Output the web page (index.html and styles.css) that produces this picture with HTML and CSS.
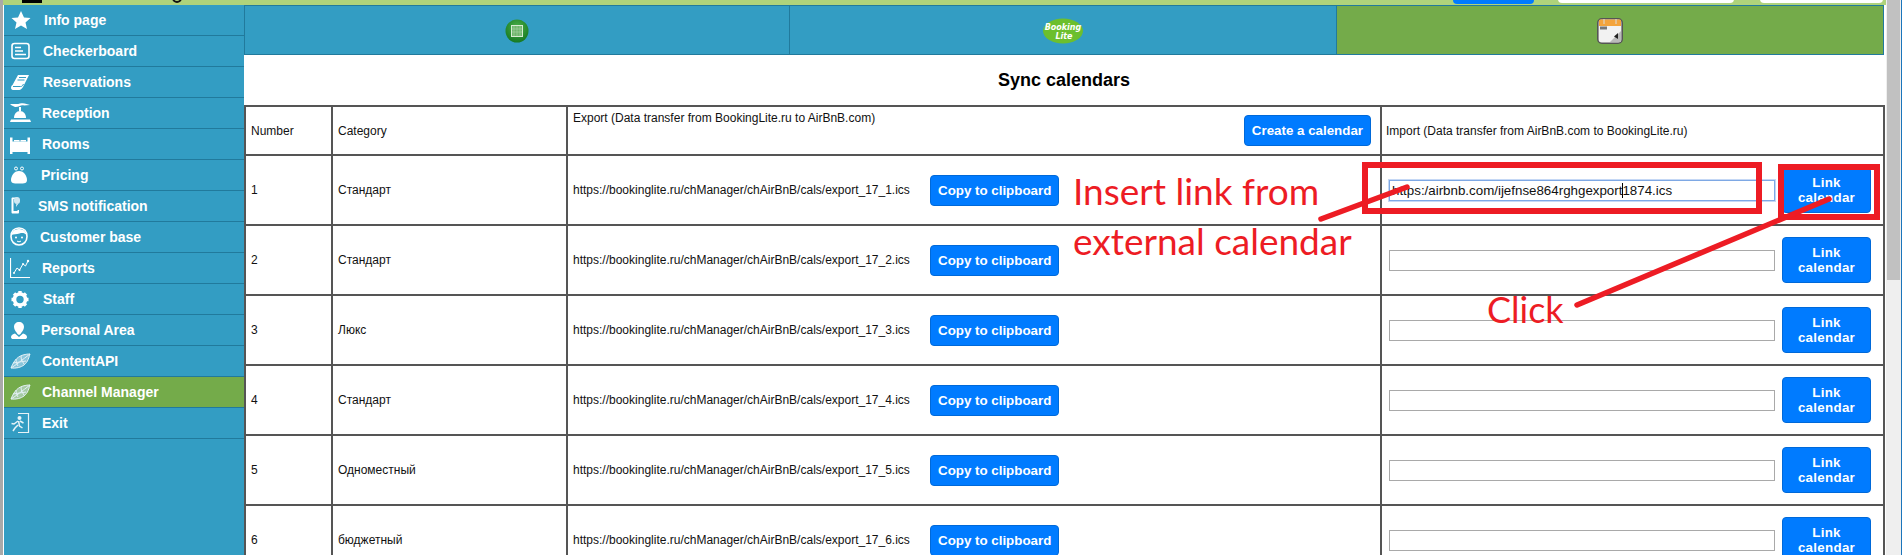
FILE: index.html
```html
<!DOCTYPE html>
<html lang="en">
<head>
<meta charset="utf-8">
<title>Sync calendars</title>
<link rel="stylesheet" href="styles.css">
</head>
<body>
<div class="shell">
  <div class="strip"></div>
  <div class="page">
    <header class="topbar">
      <span class="top-logo"></span>
      <span class="top-ring"></span>
      <span class="top-btn"></span>
      <span class="top-input top-input-a"></span>
      <span class="top-input top-input-b"></span>
    </header>
    <div class="columns">
      <nav class="sidebar">
        <a class="item"><svg width="34" height="30" viewBox="10 0 34 30"><polygon fill="#fff" points="21,6 24,12.5 30.5,13 25.5,17.6 27,24 21,20.6 15,24 16.5,17.6 11.5,13 18,12.5"/></svg><span>Info page</span></a>
        <a class="item"><svg width="33" height="30" viewBox="10 0 33 30"><rect x="12" y="7.5" width="17" height="15" rx="2.5" fill="none" stroke="#fff" stroke-width="1.6"/><path d="M15 11.5h6M15 15h8M15 18.5h11" stroke="#fff" stroke-width="1.4" fill="none"/></svg><span>Checkerboard</span></a>
        <a class="item"><svg width="33" height="30" viewBox="10 0 33 30"><path d="M18 8h11l-6 12c-1.500 2.500-3 3-5 3h-5c-2.500 0-2.500-4-.5-5z" fill="#fff"/><path d="M13 19.500h7.500c1.500 0 2-.5 3-2.500M19 10.500h7M17.500 13h7" stroke="#339dc3" stroke-width="1" fill="none"/></svg><span>Reservations</span></a>
        <a class="item"><svg width="32" height="30" viewBox="10 0 32 30"><path d="M10 6.500c3-1.500 6 .5 10-1 4-1 7 .5 10 1.500l-6 .5c-3-1-6 2-9 1.500z" fill="#fff"/><path d="M19 9h2v4h-2z" fill="#fff"/><path d="M14 20c0-4 2.500-7 6-7s6 3 6 7z" fill="#fff"/><path d="M11 21.500h19l1 2.500H10z" fill="#fff"/></svg><span>Reception</span></a>
        <a class="item"><svg width="32" height="30" viewBox="10 0 32 30"><path d="M10 8.500h2.500v4h15v-4H30V25h-2.500v-2h-15v2H10z" fill="#fff"/><path d="M14 12.500v-1.500h5.500v1.500M20.500 12.500v-1.500H26v1.500" fill="#fff"/></svg><span>Rooms</span></a>
        <a class="item"><svg width="31" height="30" viewBox="10 0 31 30"><circle cx="16" cy="8.500" r="1.500" fill="none" stroke="#fff"/><circle cx="22" cy="8.500" r="1.500" fill="none" stroke="#fff"/><path d="M19 11c5 0 8 5 8 9 0 3-2 3.500-8 3.500s-8-.5-8-3.500c0-4 3-9 8-9z" fill="#fff"/></svg><span>Pricing</span></a>
        <a class="item"><svg width="28" height="30" viewBox="10 0 28 30"><path d="M12.500 6.500h5v1.500h-4v12h4v-1h1.500v2.500c0 .5-.5 1-1 1h-5.500c-.5 0-1-.5-1-1V7.500c0-.5.5-1 1-1z" fill="#fff"/><rect x="14" y="6" width="6" height="7" rx="3" fill="#cfe8f2"/><path d="M16.500 13l-.5 3 2-3" fill="#fff"/></svg><span>SMS notification</span></a>
        <a class="item"><svg width="30" height="30" viewBox="10 0 30 30"><path d="M19 6c5 0 8 3.500 8 8.500S23.500 23 19 23s-8-3.500-8-8.500S14 6 19 6z" fill="none" stroke="#fff" stroke-width="1.600"/><path d="M11.500 13c0-2 2-6 7.500-6s7.500 4 7.500 6c-2-2-4-2.500-7-1.500-3 1-6 .5-8 1.500z" fill="#fff"/><circle cx="16" cy="15.500" r="1" fill="#fff"/><circle cx="22" cy="15.500" r="1" fill="#fff"/><path d="M17 19c1.200 1 2.800 1 4 0" stroke="#fff" fill="none"/></svg><span>Customer base</span></a>
        <a class="item"><svg width="32" height="30" viewBox="10 0 32 30"><path d="M10.500 5v19.500H30" stroke="#fff" stroke-width="1.200" fill="none"/><path d="M14 20l3-5 2.500 2 3.500-6 2.500 2 2.500-5" stroke="#fff" fill="none"/><circle cx="14" cy="20" r="1" fill="#fff"/><circle cx="19.500" cy="17" r="1" fill="#fff"/><circle cx="23" cy="11" r="1" fill="#fff"/><circle cx="28" cy="8" r="1.200" fill="#fff"/></svg><span>Reports</span></a>
        <a class="item"><svg width="33" height="30" viewBox="10 0 33 30"><circle cx="20" cy="15.500" r="5.500" fill="none" stroke="#fff" stroke-width="3.600"/><path d="M20 7v4M20 20v4M11.500 15.500h4M24.500 15.500h4M14 9.500l3 3M23 18.500l3 3M26 9.500l-3 3M17 18.500l-3 3" stroke="#fff" stroke-width="3.400"/></svg><span>Staff</span></a>
        <a class="item"><svg width="31" height="30" viewBox="10 0 31 30"><path d="M19 7c3 0 5 2 5 5s-2.500 5-3.500 7l-1.500 1-1.500-1C16.500 17 14 15 14 12s2-5 5-5z" fill="#fff"/><path d="M15 18.500c-2 .5-4 1.500-4 3.500 0 1.500 1 2 2 2h12c1 0 2-.5 2-2 0-2-2-3-4-3.500L19 22z" fill="#fff"/></svg><span>Personal Area</span></a>
        <a class="item"><svg width="32" height="30" viewBox="10 0 32 30"><use href="#globe"/></svg><span>ContentAPI</span></a>
        <a class="item active"><svg width="32" height="30" viewBox="10 0 32 30"><use href="#globe"/></svg><span>Channel Manager</span></a>
        <a class="item"><svg width="32" height="30" viewBox="10 0 32 30"><path d="M18 5.500h10.500v19H18" fill="none" stroke="#e7f3f7" stroke-width="1.200"/><circle cx="19.500" cy="10" r="2" fill="#e7f3f7"/><path d="M18 13l-4 3-2.500-.5M18.500 13l1 5 3 2M18 17l-3 3 -2 3M20 13l3.500 2" stroke="#e7f3f7" stroke-width="1.500" fill="none"/></svg><span>Exit</span></a>
      </nav>
      <main class="main">
        <div class="tabs">
          <div class="tab">
            <svg width="24" height="24" viewBox="0 0 24 24"><defs><radialGradient id="ball" cx=".5" cy=".35" r=".7"><stop offset="0" stop-color="#4cb04a"/><stop offset="1" stop-color="#12751f"/></radialGradient></defs><circle cx="12" cy="12" r="11.500" fill="url(#ball)"/><rect x="6.500" y="6.500" width="11" height="11" fill="#6fb56c" stroke="#d6ecd2"/><path d="M9 7v10M12 7v10M15 7v10M7 10h10M7 13h10" stroke="#a9d4a4" stroke-width=".6"/></svg>
          </div>
          <div class="tab">
            <svg width="40" height="26" viewBox="0 0 40 26"><ellipse cx="20" cy="13" rx="20" ry="12.500" fill="#6cbf2e"/><text x="20" y="12" class="logo-text">Booking</text><text x="21" y="21" class="logo-text">Lite</text></svg>
          </div>
          <div class="tab tab-active">
            <svg width="26" height="26" viewBox="0 0 26 26"><rect x=".8" y=".8" width="24.400" height="24.400" rx="4" fill="#f2f2f2" stroke="#555" stroke-width="1.600"/><path d="M2 2.500a1.500 1.500 0 0 1 1.500-1h19a1.500 1.500 0 0 1 1.500 1V8H2z" fill="#f4a43c"/><path d="M7 1v5M19 1v5" stroke="#ddd" stroke-width="1"/><rect x="3" y="8.500" width="7" height="3" fill="#777"/><path d="M24 13L13 24h10c.5 0 1-.5 1-1z" fill="#bbb"/><path d="M21 15l-4 3.500 4 2.500z" fill="#222"/></svg>
          </div>
        </div>
        <h1 class="title">Sync calendars</h1>
        <table class="grid">
          <colgroup><col class="c-num"><col class="c-cat"><col class="c-exp"><col class="c-imp"></colgroup>
          <thead>
            <tr>
              <th>Number</th>
              <th>Category</th>
              <th class="export-head"><div class="export-wrap"><span class="export-label">Export (Data transfer from BookingLite.ru to AirBnB.com)</span><button class="btn">Create a calendar</button></div></th>
              <th class="import-head">Import (Data transfer from AirBnB.com to BookingLite.ru)</th>
            </tr>
          </thead>
          <tbody>
            <tr>
              <td>1</td><td>Стандарт</td>
              <td><div class="export-row"><span class="url">https://bookinglite.ru/chManager/chAirBnB/cals/export_17_1.ics</span><button class="btn">Copy to clipboard</button></div></td>
              <td class="import-cell"><div class="import-row"><span class="field"><input class="link-input focused" type="text" value="https:/airbnb.com/ijefnse864rghgexport1874.ics"><i class="caret"></i></span><button class="btn btn-link">Link calendar</button></div></td>
            </tr>
            <tr>
              <td>2</td><td>Стандарт</td>
              <td><div class="export-row"><span class="url">https://bookinglite.ru/chManager/chAirBnB/cals/export_17_2.ics</span><button class="btn">Copy to clipboard</button></div></td>
              <td class="import-cell"><div class="import-row"><span class="field"><input class="link-input" type="text"></span><button class="btn btn-link">Link calendar</button></div></td>
            </tr>
            <tr>
              <td>3</td><td>Люкс</td>
              <td><div class="export-row"><span class="url">https://bookinglite.ru/chManager/chAirBnB/cals/export_17_3.ics</span><button class="btn">Copy to clipboard</button></div></td>
              <td class="import-cell"><div class="import-row"><span class="field"><input class="link-input" type="text"></span><button class="btn btn-link">Link calendar</button></div></td>
            </tr>
            <tr>
              <td>4</td><td>Стандарт</td>
              <td><div class="export-row"><span class="url">https://bookinglite.ru/chManager/chAirBnB/cals/export_17_4.ics</span><button class="btn">Copy to clipboard</button></div></td>
              <td class="import-cell"><div class="import-row"><span class="field"><input class="link-input" type="text"></span><button class="btn btn-link">Link calendar</button></div></td>
            </tr>
            <tr>
              <td>5</td><td>Одноместный</td>
              <td><div class="export-row"><span class="url">https://bookinglite.ru/chManager/chAirBnB/cals/export_17_5.ics</span><button class="btn">Copy to clipboard</button></div></td>
              <td class="import-cell"><div class="import-row"><span class="field"><input class="link-input" type="text"></span><button class="btn btn-link">Link calendar</button></div></td>
            </tr>
            <tr>
              <td>6</td><td>бюджетный</td>
              <td><div class="export-row"><span class="url">https://bookinglite.ru/chManager/chAirBnB/cals/export_17_6.ics</span><button class="btn">Copy to clipboard</button></div></td>
              <td class="import-cell"><div class="import-row"><span class="field"><input class="link-input" type="text"></span><button class="btn btn-link">Link calendar</button></div></td>
            </tr>
          </tbody>
        </table>
      </main>
    </div>
  </div>
  <div class="scrollbar"><div class="thumb"></div></div>

  <svg class="marks" width="1902" height="555" viewBox="0 0 1902 555">
    <defs>
      <g id="globe" fill="none" stroke="#e4f1f6" stroke-width="1">
        <path d="M11 22c2-5 5-11 12-13 3-.8 5-1 7-1-1 3-2 8-6 11-3 2.500-8 3.500-13 3z" fill="#cfe6ef" fill-opacity=".55"/>
        <path d="M11 22c5-3 11-8 19-14M16 13c0 3 1 5 2 7M21 10c0 3 1 5 3 8M13 17c4-1 9-1 13-2"/>
      </g>
    </defs>
    <rect x="1365" y="165" width="394" height="46" class="mark-box"/>
    <rect x="1781" y="167" width="96" height="50" class="mark-box"/>
    <line x1="1321" y1="219" x2="1407" y2="187" class="mark-line"/>
    <line x1="1577" y1="305" x2="1829" y2="199" class="mark-line"/>
    <text x="1073" y="205" class="mark-text">Insert link from</text>
    <text x="1073" y="255" class="mark-text">external calendar</text>
    <text x="1487" y="323" class="mark-text mark-text-click">Click</text>
  </svg>
</div>
</body>
</html>
```
FILE: styles.css
```css
* { box-sizing: border-box; }
html, body { margin: 0; height: 100%; overflow: hidden; background: #fff; }
body { font-family: "Liberation Sans", Arial, sans-serif; font-size: 12px; color: #111; }

.shell { position: relative; display: flex; height: 555px; overflow: hidden; }
.strip { width: 3px; background: #a9a9a9; flex: none; }
.page { flex: 1; min-width: 0; display: flex; flex-direction: column; }

.topbar { position: relative; height: 5px; flex: none; background: #afd37b; overflow: hidden; }
.top-logo { position: absolute; left: 19px; top: 0; width: 20px; height: 3px; background: #000; }
.top-ring { position: absolute; left: 169px; top: -7px; width: 10px; height: 10px; border: 2px solid #111; border-radius: 50%; }
.top-btn { position: absolute; left: 1450px; top: -6px; width: 81px; height: 10px; background: #007bff; border-radius: 4px; }
.top-input { position: absolute; top: -6px; height: 9px; background: #fff; border-radius: 4px; }
.top-input-a { left: 1555px; width: 176px; }
.top-input-b { left: 1757px; width: 123px; }

.columns { flex: 1; display: flex; min-height: 0; }

.sidebar { width: 241px; flex: none; padding-left: 1px; background: #339dc3; background-clip: content-box; }
.item { display: flex; align-items: center; height: 31px; padding-left: 6px; border-bottom: 1px solid #217a9c; color: #fff; font-weight: 700; font-size: 14px; white-space: nowrap; }
.item svg { flex: none; }
.item.active { background: #74ab4a; }

.main { flex: 1; min-width: 0; display: block; padding-right: 2px; }

.tabs { display: grid; grid-template-columns: 546px 547px 1fr; height: 50px; }
.tab { display: flex; align-items: center; justify-content: center; background: #339dc3; border: 1px solid #217a9c; border-left-width: 0; padding-top: 1px; }
.tab:first-child { border-left-width: 1px; }
.tab-active { background: #74ab4a; }
.logo-text { font: italic 700 8px "DejaVu Sans", sans-serif; fill: #fff; text-anchor: middle; }

.title { height: 50px; margin: 0; display: flex; align-items: center; justify-content: center; font-size: 18px; font-weight: 700; color: #000; }

.grid { width: 1639px; table-layout: fixed; border-collapse: collapse; }
.c-num { width: 87px; }
.c-cat { width: 235px; }
.c-exp { width: 814px; }
.c-imp { width: 503px; }
.grid th, .grid td { border: 2px solid #555; padding: 0 5px; font-weight: 400; font-size: 12px; text-align: left; vertical-align: middle; color: #111; }
.grid th { height: 49px; }
.grid td { height: 70px; }

.grid th.export-head { padding: 0 9px 0 5px; }
.grid th.import-head { padding-left: 4px; }
.export-wrap { display: flex; justify-content: space-between; align-items: center; height: 47px; }
.export-label { align-self: flex-start; margin-top: 4px; }
.export-row { display: flex; align-items: center; }
.url { width: 357px; flex: none; }

.btn { font: 700 13.33px/15px "Liberation Sans", Arial, sans-serif; color: #fff; background: #007bff; border: 1px solid #0069d9; border-radius: 4px; padding: 7px 7px; white-space: nowrap; }
.btn-link { width: 89px; white-space: normal; padding: 7px 12px; flex: none; letter-spacing: .3px; }

.grid td.import-cell { padding: 0 12px 0 7px; }
.import-row { display: flex; align-items: center; justify-content: space-between; }
.field { position: relative; display: block; width: 386px; flex: none; }
.link-input { display: block; width: 100%; height: 21px; padding: 1px 2px; border: 1px solid #a9a9a9; font: 13.33px "Liberation Sans", Arial, sans-serif; color: #111; background: #fff; outline: none; }
.link-input.focused { border-color: #7ea8e4; box-shadow: 0 0 0 1px #c5d8f5; }
.caret { position: absolute; left: 233px; top: 3px; width: 1px; height: 15px; background: #000; }

.scrollbar { width: 16px; flex: none; background: #efefef; border-right: 1px solid #1b75bb; padding: 0 1px; }
.thumb { width: 13px; height: 280px; background: #c1c1c1; }

.marks { position: absolute; left: 0; top: 0; pointer-events: none; }
.mark-box { fill: none; stroke: #ed1c24; stroke-width: 6; }
.mark-line { stroke: #ed1c24; stroke-width: 5.5; stroke-linecap: round; }
.mark-text { font: 37px Lato, sans-serif; fill: #ed1c24; }
.mark-text-click { font-size: 36px; }
```
